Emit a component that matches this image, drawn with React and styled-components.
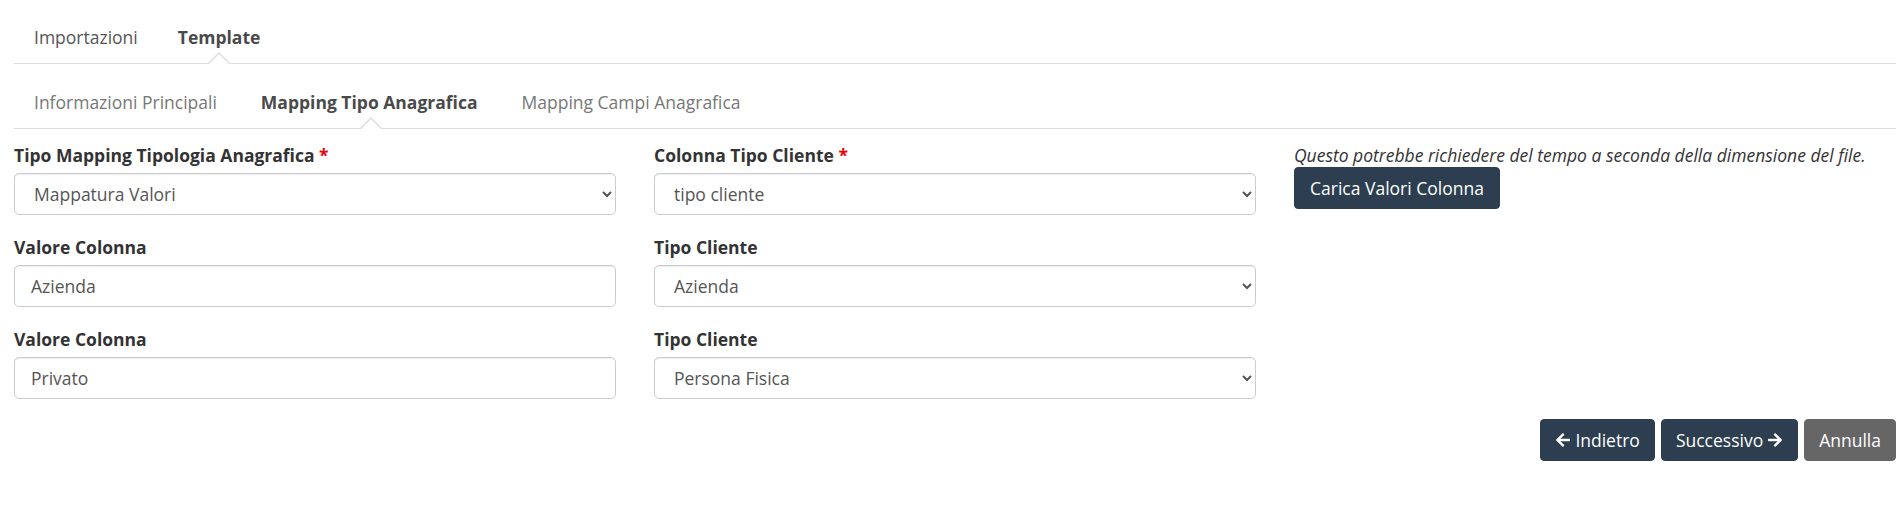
import styled, { createGlobalStyle } from "styled-components";
import { FaArrowLeft, FaArrowRight } from "react-icons/fa";

const GlobalStyle = createGlobalStyle`
  body {
    margin: 0;
    background: #fff;
    font-family: "Open Sans", "Liberation Sans", sans-serif;
    font-size: 17.5px;
    color: #333;
  }
  * {
    box-sizing: border-box;
  }
`;

export default function App() {
  const mainTabs = ["Importazioni", "Template"];
  const subTabs = ["Informazioni Principali", "Mapping Tipo Anagrafica", "Mapping Campi Anagrafica"];

  const rows = [
    { left: "Azienda", right: "Azienda" },
    { left: "Privato", right: "Persona Fisica" },
  ];

  return (
    <Page>
      <GlobalStyle />
      <Tabs>
        {mainTabs.map((t) => (
          <Tab key={t} $active={t === "Template"} $main>
            {t}
          </Tab>
        ))}
      </Tabs>

      <Tabs $sub>
        {subTabs.map((t) => (
          <Tab key={t} $active={t === "Mapping Tipo Anagrafica"}>
            {t}
          </Tab>
        ))}
      </Tabs>

      <FormGrid>
        <Column>
          <Group>
            <Label>
              Tipo Mapping Tipologia Anagrafica <Required>*</Required>
            </Label>
            <Select defaultValue="map">
              <option value="map">Mappatura Valori</option>
            </Select>
          </Group>
          {rows.map((r) => (
            <Group key={r.left}>
              <Label>Valore Colonna</Label>
              <Input defaultValue={r.left} />
            </Group>
          ))}
        </Column>

        <Column>
          <Group>
            <Label>
              Colonna Tipo Cliente <Required>*</Required>
            </Label>
            <Select defaultValue="tc">
              <option value="tc">tipo cliente</option>
            </Select>
          </Group>
          {rows.map((r) => (
            <Group key={r.right}>
              <Label>Tipo Cliente</Label>
              <Select defaultValue={r.right}>
                <option value={r.right}>{r.right}</option>
              </Select>
            </Group>
          ))}
        </Column>

        <Column>
          <Hint>Questo potrebbe richiedere del tempo a seconda della dimensione del file.</Hint>
          <div>
            <Button type="button">Carica Valori Colonna</Button>
          </div>
        </Column>
      </FormGrid>

      <Actions>
        <Button type="button" $compact>
          <FaArrowLeft size={16} /> Indietro
        </Button>
        <Button type="button" $compact>
          Successivo <FaArrowRight size={16} />
        </Button>
        <Button type="button" $compact $variant="cancel">
          Annulla
        </Button>
      </Actions>
    </Page>
  );
}

const Page = styled.div`
  padding: 15px 5px 20px 14px;
`;

const Tabs = styled.div`
  display: flex;
  border-bottom: 1px solid #ddd;
  margin-top: ${(p) => (p.$sub ? "16px" : "0")};
`;

const Tab = styled.div`
  position: relative;
  padding: 0 ${(p) => (p.$main ? "20px" : "24px")} 3px 20px;
  height: 48px;
  line-height: 45px;
  font-weight: ${(p) => (p.$active ? 700 : 400)};
  color: ${(p) => (p.$active ? "#4a4a4a" : p.$main ? "#555" : "#777")};
  cursor: pointer;

  ${(p) =>
    p.$active &&
    `
    &::before,
    &::after {
      content: "";
      position: absolute;
      left: 50%;
      width: 0;
      height: 0;
      border-style: solid;
    }
    &::before {
      bottom: 0;
      margin-left: -11px;
      border-width: 0 11px 11px 11px;
      border-color: transparent transparent #ddd transparent;
    }
    &::after {
      bottom: -1px;
      margin-left: -10px;
      border-width: 0 10px 10px 10px;
      border-color: transparent transparent #fff transparent;
    }
  `}
`;

const FormGrid = styled.div`
  display: grid;
  grid-template-columns: repeat(3, 1fr);
  column-gap: 38px;
  padding-top: 14px;
`;

const Column = styled.div`
  display: flex;
  flex-direction: column;
  align-items: stretch;
`;

const Group = styled.div`
  display: flex;
  flex-direction: column;
  margin-bottom: 20px;

  &:last-child {
    margin-bottom: 0;
  }
`;

const Label = styled.label`
  font-weight: 700;
  color: #333;
  line-height: 24px;
  margin-bottom: 6px;
`;

const Required = styled.span`
  color: #e00;
`;

const fieldBase = `
  height: 42px;
  width: 100%;
  border: 1px solid #ccc;
  border-radius: 5px;
  font-family: "Open Sans", "Liberation Sans", sans-serif;
  font-size: 17.5px;
  color: #555;
  background: #fff;
  box-shadow: inset 0 1px 1px rgba(0, 0, 0, 0.075);
  outline: none;
`;

const Select = styled.select`
  ${fieldBase}
  padding: 6px 10px 6px 15px;
`;

const Input = styled.input`
  ${fieldBase}
  padding: 6px 16px;
`;

const Hint = styled.p`
  margin: 0;
  font-style: italic;
  color: #333;
  line-height: 24px;
`;

const Button = styled.button`
  display: inline-flex;
  align-items: center;
  gap: 4px;
  height: 42px;
  padding: 0 ${(p) => (p.$compact ? "14px" : "15px")};
  border: 1px solid ${(p) => (p.$variant === "cancel" ? "#666" : "#2c3e50")};
  border-radius: 4px;
  background: ${(p) => (p.$variant === "cancel" ? "#666" : "#2c3e50")};
  color: #fff;
  font-family: "Open Sans", "Liberation Sans", sans-serif;
  font-size: 17.5px;
  cursor: pointer;
`;

const Actions = styled.div`
  display: flex;
  justify-content: flex-end;
  gap: 6px;
  margin-top: 20px;
`;
